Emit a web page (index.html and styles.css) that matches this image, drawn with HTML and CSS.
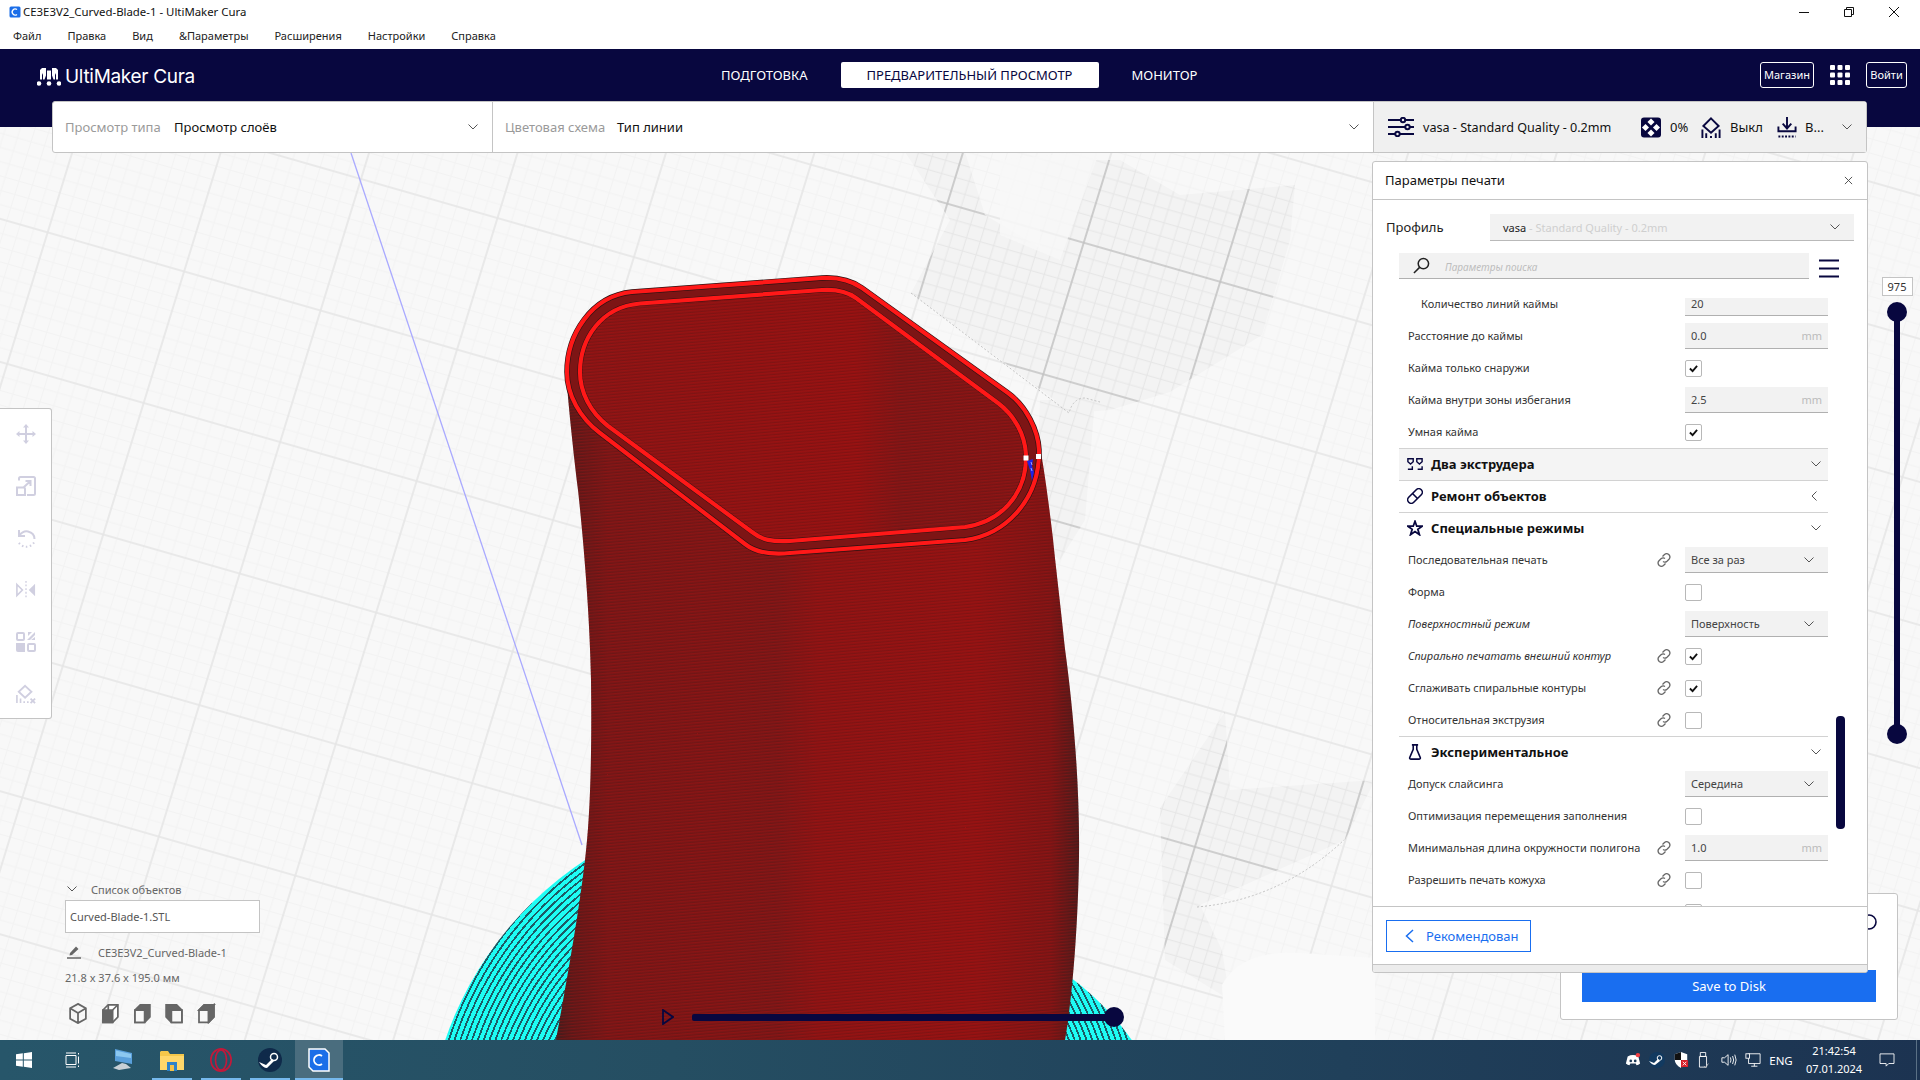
FILE: index.html
```
<!DOCTYPE html>
<html lang="ru">
<head>
<meta charset="utf-8">
<title>CE3E3V2_Curved-Blade-1 - UltiMaker Cura</title>
<link rel="stylesheet" href="styles.css">
</head>
<body>
<div class="titlebar">
  <svg class="app-icon" viewBox="0 0 12 12"><rect x="0.5" y="0.5" width="11" height="11" rx="1.5" fill="#1b6ee8"/><path d="M8 3.6A3 3 0 1 0 8 8.4" fill="none" stroke="#fff" stroke-width="1.3"/></svg>
  <span class="title-text">CE3E3V2_Curved-Blade-1 - UltiMaker Cura</span>
  <div class="win-btns">
    <svg class="win-btn" viewBox="0 0 12 12"><path d="M1 6.5H11" stroke="#111" fill="none"/></svg>
    <svg class="win-btn" viewBox="0 0 12 12"><path d="M1.5 3.5H8.5V10.5H1.5ZM3.5 3.5V1.5H10.5V8.5H8.5" stroke="#111" fill="none"/></svg>
    <svg class="win-btn" viewBox="0 0 12 12"><path d="M1 1L11 11M11 1L1 11" stroke="#111" fill="none"/></svg>
  </div>
</div>
<nav class="menubar">
  <span>Файл</span><span>Правка</span><span>Вид</span><span>&amp;Параметры</span><span>Расширения</span><span>Настройки</span><span>Справка</span>
</nav>
<header class="header">
  <div class="logo">
    <svg class="logo-mark" viewBox="0 0 24 18" fill="#fff"><path d="M5 0H9V7.500L7.500 11.500H6V5L5 7V11.500H3V2Z"/><path d="M19 0H15V7.500L16.500 11.500H18V5L19 7V11.500H21V2Z"/><path d="M10 2.500H14V11.500H10Z"/><circle cx="2" cy="15.500" r="2.300"/><circle cx="12" cy="15.500" r="2.300"/><circle cx="22" cy="15.500" r="2.300"/></svg>
    <span class="logo-text">UltiMaker Cura</span>
  </div>
  <div class="tabs">
    <span class="tab tab-first">ПОДГОТОВКА</span>
    <span class="tab tab-active">ПРЕДВАРИТЕЛЬНЫЙ ПРОСМОТР</span>
    <span class="tab">МОНИТОР</span>
  </div>
  <div class="head-actions">
    <span class="outline-btn btn-store">Магазин</span>
    <svg class="apps-icon" viewBox="0 0 20 20" fill="#fff"><rect x="0" y="0" width="5" height="5" rx="1"/><rect x="7.500" y="0" width="5" height="5" rx="1"/><rect x="15" y="0" width="5" height="5" rx="1"/><rect x="0" y="7.500" width="5" height="5" rx="1"/><rect x="7.500" y="7.500" width="5" height="5" rx="1"/><rect x="15" y="7.500" width="5" height="5" rx="1"/><rect x="0" y="15" width="5" height="5" rx="1"/><rect x="7.500" y="15" width="5" height="5" rx="1"/><rect x="15" y="15" width="5" height="5" rx="1"/></svg>
    <span class="outline-btn btn-login">Войти</span>
  </div>
</header>

<main class="stage">
  <svg class="scene" viewBox="0 127 1920 913" preserveAspectRatio="none">
    <defs>
      <pattern id="grid" patternUnits="userSpaceOnUse" width="142" height="138" patternTransform="matrix(0.961 0.275 -0.293 0.953 361 179)">
        <path d="M14.200 0V138M28.400 0V138M42.600 0V138M56.800 0V138M71 0V138M85.200 0V138M99.400 0V138M113.600 0V138M127.800 0V138M0 13.800H142M0 27.600H142M0 41.400H142M0 55.200H142M0 69H142M0 82.800H142M0 96.600H142M0 110.400H142M0 124.200H142" stroke="#f2f2f2" fill="none"/>
        <path d="M0 0V138M142 0V138M0 0H142M0 138H142" stroke="#e5e5e5" stroke-width="1.600" fill="none"/>
      </pattern>
      <pattern id="grid-dark" patternUnits="userSpaceOnUse" width="142" height="138" patternTransform="matrix(0.961 0.275 -0.293 0.953 361 179)">
        <rect width="142" height="138" fill="#f3f3f3"/>
        <path d="M14.200 0V138M28.400 0V138M42.600 0V138M56.800 0V138M71 0V138M85.200 0V138M99.400 0V138M113.600 0V138M127.800 0V138M0 13.800H142M0 27.600H142M0 41.400H142M0 55.200H142M0 69H142M0 82.800H142M0 96.600H142M0 110.400H142M0 124.200H142" stroke="#e6e6e6" fill="none"/>
        <path d="M0 0V138M142 0V138M0 0H142M0 138H142" stroke="#c2c2c2" stroke-width="1.600" fill="none"/>
      </pattern>
      <radialGradient id="rings" gradientUnits="userSpaceOnUse" cx="788" cy="1150" r="5.500" spreadMethod="repeat">
        <stop offset="0" stop-color="#1efcf4"/><stop offset=".68" stop-color="#1efcf4"/><stop offset=".68" stop-color="#1c5c66"/><stop offset="1" stop-color="#1c5c66"/>
      </radialGradient>
      <linearGradient id="wall" gradientUnits="userSpaceOnUse" x1="556" y1="0" x2="1082" y2="0">
        <stop offset="0" stop-color="#451d1d"/><stop offset=".03" stop-color="#601919"/><stop offset=".1" stop-color="#7a1717"/><stop offset=".3" stop-color="#7e1616"/><stop offset=".42" stop-color="#7b1717"/><stop offset=".5" stop-color="#8c1414"/><stop offset=".8" stop-color="#921313"/><stop offset=".94" stop-color="#7e1515"/><stop offset="1" stop-color="#451c1c"/>
      </linearGradient>
      <linearGradient id="inside" gradientUnits="userSpaceOnUse" x1="579" y1="0" x2="1026" y2="0">
        <stop offset="0" stop-color="#8a1515"/><stop offset=".62" stop-color="#931212"/><stop offset=".72" stop-color="#7e1616"/><stop offset="1" stop-color="#831515"/>
      </linearGradient>
      <pattern id="stripes" patternUnits="userSpaceOnUse" width="4" height="3" patternTransform="rotate(-5)">
        <rect width="4" height="1" fill="#b01010" opacity=".3"/><rect y="2" width="4" height="1" fill="#3a1212" opacity=".2"/>
      </pattern>
    </defs>
    <rect x="0" y="127" width="1920" height="913" fill="#f8f8f8"/>
    <rect x="0" y="127" width="1920" height="913" fill="url(#grid)"/>
    <path d="M905 152H965L985 215L1040 248V160L1120 160L1180 195L1295 185L1290 240L1262 335L1170 392L1110 410L1072 413L911 293L950 220Z" fill="url(#grid-dark)"/>
    <path d="M1040 400H1095L1085 520L1060 560L1035 540Z" fill="url(#grid-dark)"/>
    <path d="M1225 712L1160 808L1165 960L1230 1000L1222 950L1200 905L1345 840L1375 780L1230 790Z" fill="url(#grid-dark)"/>
    <path d="M1000 160L1100 150L1060 260L1000 235Z" fill="#f8f8f8" opacity=".8"/>
    <path d="M1222 985Q1240 950 1300 953L1375 958L1375 1040H1225Z" fill="#fafafa"/>
    <path d="M911 293L1069 413Q1073 398 1085 398L1100 402" fill="none" stroke="#c4c4c4" stroke-dasharray="2 2"/>
    <path d="M1197 907Q1280 900 1344 840" fill="none" stroke="#c4c4c4" stroke-dasharray="2 2"/>
    <path d="M351 153L582 845" stroke="#a9a9ff" stroke-width="1.300" fill="none"/>
    <path d="M788 799.400A361 350.600 0 0 0 427 1150H788Z" fill="url(#rings)"/>
    <path d="M788 892A380 258 0 0 1 1168 1150H788Z" fill="url(#rings)"/>
    <path d="M566 372C568 400 572 440 578 490C584 545 590 620 591 680C592 760 590 820 585 860C578 920 565 990 556 1040H1065C1072 1000 1078 930 1079 857C1080 780 1072 700 1065 649C1060 600 1055 560 1053 539C1049 505 1045 475 1041 453L1039 440L1000 400L800 300L640 300Z" fill="url(#wall)"/>
    <path d="M566 372C568 400 572 440 578 490C584 545 590 620 591 680C592 760 590 820 585 860C578 920 565 990 556 1040H1065C1072 1000 1078 930 1079 857C1080 780 1072 700 1065 649C1060 600 1055 560 1053 539C1049 505 1045 475 1041 453L1039 440L1000 400L800 300L640 300Z" fill="url(#stripes)"/>
    <path d="M567 372C567 335 591 296 632 292L822 278C840 277 852 281 862 288L1008 393C1026 406 1038 430 1039 450C1040 500 1005 535 965 540L790 553C770 555 755 552 745 544L600 433C580 418 567 395 567 372Z" fill="#7d1515" stroke="#2c1212" stroke-width="5.500"/>
    <path d="M567 372C567 335 591 296 632 292L822 278C840 277 852 281 862 288L1008 393C1026 406 1038 430 1039 450C1040 500 1005 535 965 540L790 553C770 555 755 552 745 544L600 433C580 418 567 395 567 372Z" fill="none" stroke="#ff1818" stroke-width="4.200"/>
    <path d="M580 372C580 340 600 307 640 303.500L822 290C838 289 848 292 856 298L998 403C1014 415 1025 434 1026 455C1027 495 1000 522 965 527L790 541C772 542 762 540 752 532L608 426C590 412 580 392 580 372Z" fill="url(#inside)" stroke="#2c1212" stroke-width="5.200"/>
    <path d="M580 372C580 340 600 307 640 303.500L822 290C838 289 848 292 856 298L998 403C1014 415 1025 434 1026 455C1027 495 1000 522 965 527L790 541C772 542 762 540 752 532L608 426C590 412 580 392 580 372Z" fill="url(#stripes)" stroke="#ff1818" stroke-width="4.200"/>
    <path d="M1027 461L1033 459L1032 466L1034 472L1032 481L1030 470Z" fill="#1e22e8"/>
    <path d="M1031 462l1 3m-1 3l1 3" stroke="#9fa4ff" fill="none"/>
    <rect x="1023.500" y="455.500" width="5" height="5" fill="#fff"/>
    <rect x="1036" y="454" width="5" height="5" fill="#fff"/>
  </svg>

  <div class="viewbar">
    <div class="view-cell view-cell-type">
      <span class="muted">Просмотр типа</span><span class="strong">Просмотр слоёв</span>
      <svg class="chev chev-end" viewBox="0 0 10 6"><path d="M.5 .5L5 5L9.500 .5"/></svg>
    </div>
    <div class="view-cell view-cell-scheme">
      <span class="muted muted-wide">Цветовая схема</span><span class="strong">Тип линии</span>
      <svg class="chev chev-end" viewBox="0 0 10 6"><path d="M.5 .5L5 5L9.500 .5"/></svg>
    </div>
    <div class="view-cell view-cell-print">
      <svg class="bar-icon bar-icon-wide" viewBox="0 0 26 20" fill="none" stroke="#08073f" stroke-width="2"><path d="M0 3H13M18 3H26M0 10H17M22 10H26M0 17H7M12 17H26"/><circle cx="15" cy="3" r="2.200"/><circle cx="19.500" cy="10" r="2.200"/><circle cx="9.500" cy="17" r="2.200"/></svg>
      <span class="print-name">vasa - Standard Quality - 0.2mm</span>
      <svg class="bar-icon" viewBox="0 0 20 20"><rect width="20" height="20" rx="3" fill="#08073f"/><g fill="#fff"><rect x="7.500" y="2" width="5" height="5" transform="rotate(45 10 4.500)"/><rect x="7.500" y="13" width="5" height="5" transform="rotate(45 10 15.500)"/><rect x="2" y="7.500" width="5" height="5" transform="rotate(45 4.500 10)"/><rect x="13" y="7.500" width="5" height="5" transform="rotate(45 15.500 10)"/></g></svg>
      <span class="print-val val-infill">0%</span>
      <svg class="bar-icon" viewBox="0 0 20 22" fill="none" stroke="#08073f" stroke-width="2"><path d="M10 1.500L18 9.500L10 16.500L2 9.500Z"/><path d="M1 13V22M5 17V22M10 20V22M15 17V22M19 13V22"/></svg>
      <span class="print-val val-support">Выкл</span>
      <svg class="bar-icon" viewBox="0 0 20 22" fill="none" stroke="#08073f" stroke-width="2"><path d="M10 0V11M5.500 7L10 12L14.500 7"/><path d="M1 10V15H19V10"/><path d="M1 20.500H19" stroke-dasharray="2 1.500"/></svg>
      <span class="print-val val-adhesion">В...</span>
      <svg class="chev chev-end" viewBox="0 0 10 6"><path d="M.5 .5L5 5L9.500 .5"/></svg>
    </div>
  </div>

  <aside class="toolbox">
    <svg class="tool" viewBox="0 0 20 20"><path d="M10 0L13 3.500H11V9H16.500V7L20 10L16.500 13V11H11V16.500H13L10 20L7 16.500H9V11H3.500V13L0 10L3.500 7V9H9V3.500H7Z"/></svg>
    <svg class="tool" viewBox="0 0 20 20"><path d="M3 4.500V2.500Q3 1 4.500 1H17.500Q19 1 19 2.500V17.500Q19 19 17.500 19H11M1 11.500H7.500Q9 11.500 9 13V19H1ZM7.500 11.500L14.500 5M9.500 5H14.500V10" fill="none" stroke="#d0cfe0" stroke-width="2"/></svg>
    <svg class="tool" viewBox="0 0 20 20"><path d="M3 2V8H9M3.500 7.500Q7 2.500 12 3.500Q18.500 5 18.500 11" fill="none" stroke="#d0cfe0" stroke-width="2"/><path d="M18 14.500A9 9 0 0 1 2 13" fill="none" stroke="#d0cfe0" stroke-width="2" stroke-dasharray="1.500 2.500"/></svg>
    <svg class="tool" viewBox="0 0 22 20"><path d="M1 4L7 10L1 16Z" fill="none" stroke="#d0cfe0" stroke-width="1.800"/><path d="M21 3V17L14 10Z"/><path d="M11 0V20" stroke="#d0cfe0" stroke-width="1.500" stroke-dasharray="2 2" fill="none"/></svg>
    <svg class="tool" viewBox="0 0 20 20"><rect x="1" y="1" width="7" height="7" rx="1" fill="none" stroke="#d0cfe0" stroke-width="2"/><path d="M11 8L19 0V3L14 8M12 4L16 0H12ZM15 8H19V5Z"/><path d="M0 11H9V20H2Q0 20 0 18Z"/><rect x="12" y="12" width="7" height="7" rx="1" fill="none" stroke="#d0cfe0" stroke-width="2"/></svg>
    <svg class="tool" viewBox="0 0 22 20"><path d="M10 1L17 7.500L10 14L3 7.500Z" fill="none" stroke="#d0cfe0" stroke-width="2"/><path d="M1 11V20M5 15V20M9 18V20M13 18V20" stroke="#d0cfe0" stroke-width="1.800"/><path d="M16 15L21 20M21 15L16 20" stroke="#d0cfe0" stroke-width="2"/></svg>
  </aside>

  <section class="objects">
    <div class="obj-title"><svg class="chev chev-obj" viewBox="0 0 10 6"><path d="M.5 .5L5 5L9.500 .5"/></svg><span>Список объектов</span></div>
    <div class="obj-file">Curved-Blade-1.STL</div>
    <div class="obj-name"><svg class="pen" viewBox="0 0 14 14"><path d="M3 8L9 1.500L11.500 4L5 10L2.500 10.500Z" fill="#666"/><path d="M0 13H14" stroke="#666" stroke-width="1.500"/></svg><span>CE3E3V2_Curved-Blade-1</span></div>
    <div class="obj-size">21.8 x 37.6 x 195.0 мм</div>
    <div class="obj-views">
      <svg class="cube" viewBox="0 0 20 24" fill="none" stroke="#666" stroke-width="2"><path d="M10 1L19 6V18L10 23L1 18V6ZM1 6L10 11.500L19 6M10 11.500V23"/></svg>
      <svg class="cube" viewBox="0 0 20 24" stroke="#666" stroke-width="2" fill="#fff"><path d="M2 8L8 2H19V16L13 22H2Z"/><path d="M2 8H13V22H2Z" fill="#666"/><path d="M8 2V8M13 8L19 2"/></svg>
      <svg class="cube" viewBox="0 0 20 24" stroke="#666" stroke-width="2" fill="#fff"><path d="M2 8L8 2H19V16L13 22H2Z" fill="#666"/><path d="M2 8H13V22H2Z" fill="#f8f8f8"/></svg>
      <svg class="cube" viewBox="0 0 20 24" stroke="#666" stroke-width="2" fill="#666"><path d="M1 2H13L19 8V22H7L1 16Z"/><path d="M7 8H19V22H7Z" fill="#f8f8f8"/></svg>
      <svg class="cube" viewBox="0 0 20 24" stroke="#666" stroke-width="2" fill="#f8f8f8"><path d="M2 8L8 2H19V16L13 22H2Z"/><path d="M2 8L8 2H19L13 8Z" fill="#666"/><path d="M13 8V22"/><path d="M13 8L19 2V16L13 22Z" fill="#666"/></svg>
    </div>
  </section>

  <div class="path-slider">
    <svg class="play" viewBox="0 0 12 16"><path d="M1 1L11 8L1 15Z" fill="none" stroke="#08073f" stroke-width="1.800"/></svg>
    <div class="h-track"><span class="h-handle"></span></div>
  </div>

  <div class="layer-slider">
    <span class="layer-label">975</span>
    <div class="v-track"><span class="v-handle"></span><span class="v-handle"></span></div>
  </div>

  <div class="save-card">
    <svg class="info-arc" viewBox="0 0 16 16"><circle cx="8" cy="8" r="7" fill="none" stroke="#08073f" stroke-width="1.600"/></svg>
    <button class="save-btn">Save to Disk</button>
  </div>

  <section class="panel">
    <div class="panel-head"><span class="panel-title">Параметры печати</span>
      <svg class="close" viewBox="0 0 10 10"><path d="M1 1L9 9M9 1L1 9"/></svg>
    </div>
    <div class="profile-row">
      <span class="profile-label">Профиль</span>
      <div class="profile-select"><span class="strong-small">vasa</span><span class="faint"> - Standard Quality - 0.2mm</span>
        <svg class="chev chev-end" viewBox="0 0 10 6"><path d="M.5 .5L5 5L9.500 .5"/></svg>
      </div>
    </div>
    <div class="search-row">
      <div class="search-box">
        <svg class="search-icon" viewBox="0 0 18 18" fill="none" stroke="#222" stroke-width="1.600"><circle cx="11" cy="7" r="5.500"/><path d="M7 11L1 17"/></svg>
        <span>Параметры поиска</span>
      </div>
      <svg class="hamburger" viewBox="0 0 20 19"><path d="M0 1.500H20M0 9.500H20M0 17.500H20" stroke="#08073f" stroke-width="2.200"/></svg>
    </div>
    <div class="list">
      <div class="rows">
        <div class="row row-first"><span class="lbl lbl-child">Количество линий каймы</span><span></span><div class="field">20</div></div>
        <div class="row"><span class="lbl">Расстояние до каймы</span><span></span><div class="field">0.0<em>mm</em></div></div>
        <div class="row"><span class="lbl">Кайма только снаружи</span><span></span><span class="cb"><svg viewBox="0 0 10 10"><path d="M1 5L4 8L9 2" fill="none" stroke="#111" stroke-width="2"/></svg></span></div>
        <div class="row"><span class="lbl">Кайма внутри зоны избегания</span><span></span><div class="field">2.5<em>mm</em></div></div>
        <div class="row"><span class="lbl">Умная кайма</span><span></span><span class="cb"><svg viewBox="0 0 10 10"><path d="M1 5L4 8L9 2" fill="none" stroke="#111" stroke-width="2"/></svg></span></div>

        <div class="section section-hover section-line">
          <svg class="sec-icon" viewBox="0 0 18 14" fill="none" stroke="#08073f" stroke-width="1.600"><path d="M1 1H7V4.500L4 7L1 4.500ZM11 1H17V4.500L14 7L11 4.500ZM1 13H6V9.500M12 13H17V9.500"/></svg>
          <span>Два экструдера</span>
          <svg class="chev chev-end" viewBox="0 0 10 6"><path d="M.5 .5L5 5L9.500 .5"/></svg>
        </div>
        <div class="section section-line">
          <svg class="sec-icon" viewBox="0 0 18 18" fill="none" stroke="#08073f" stroke-width="1.800"><g transform="rotate(-45 9 9)"><rect x="-1" y="5" width="20" height="8" rx="4"/><path d="M9 5V13"/></g></svg>
          <span>Ремонт объектов</span>
          <svg class="chev chev-end chev-left" viewBox="0 0 6 10"><path d="M5.500 .5L1 5L5.500 9.500"/></svg>
        </div>
        <div class="section section-line">
          <svg class="sec-icon" viewBox="0 0 18 18" fill="none" stroke="#08073f" stroke-width="2"><path d="M9 1.500L11 7H17L12.200 10.500L14 16.500L9 13L4 16.500L5.800 10.500L1 7H7Z"/></svg>
          <span>Специальные режимы</span>
          <svg class="chev chev-end" viewBox="0 0 10 6"><path d="M.5 .5L5 5L9.500 .5"/></svg>
        </div>

        <div class="row"><span class="lbl">Последовательная печать</span><svg class="link" viewBox="0 0 16 16"><path d="M6.500 4.500L8.500 2.500Q10.500 .8 12.800 2.500Q15 5 13 7.200L11 9.200Q9 11 7 9.500M9.500 11.500L7.500 13.500Q5.500 15.200 3.200 13.500Q1 11 3 8.800L5 6.800Q7 5 9 6.500"/></svg><div class="field select">Все за раз<svg class="chev" viewBox="0 0 10 6"><path d="M.5 .5L5 5L9.500 .5"/></svg></div></div>
        <div class="row"><span class="lbl">Форма</span><span></span><span class="cb"></span></div>
        <div class="row"><span class="lbl lbl-i">Поверхностный режим</span><span></span><div class="field select">Поверхность<svg class="chev" viewBox="0 0 10 6"><path d="M.5 .5L5 5L9.500 .5"/></svg></div></div>
        <div class="row"><span class="lbl lbl-i">Спирально печатать внешний контур</span><svg class="link" viewBox="0 0 16 16"><path d="M6.500 4.500L8.500 2.500Q10.500 .8 12.800 2.500Q15 5 13 7.200L11 9.200Q9 11 7 9.500M9.500 11.500L7.500 13.500Q5.500 15.200 3.200 13.500Q1 11 3 8.800L5 6.800Q7 5 9 6.500"/></svg><span class="cb"><svg viewBox="0 0 10 10"><path d="M1 5L4 8L9 2" fill="none" stroke="#111" stroke-width="2"/></svg></span></div>
        <div class="row"><span class="lbl">Сглаживать спиральные контуры</span><svg class="link" viewBox="0 0 16 16"><path d="M6.500 4.500L8.500 2.500Q10.500 .8 12.800 2.500Q15 5 13 7.200L11 9.200Q9 11 7 9.500M9.500 11.500L7.500 13.500Q5.500 15.200 3.200 13.500Q1 11 3 8.800L5 6.800Q7 5 9 6.500"/></svg><span class="cb"><svg viewBox="0 0 10 10"><path d="M1 5L4 8L9 2" fill="none" stroke="#111" stroke-width="2"/></svg></span></div>
        <div class="row"><span class="lbl">Относительная экструзия</span><svg class="link" viewBox="0 0 16 16"><path d="M6.500 4.500L8.500 2.500Q10.500 .8 12.800 2.500Q15 5 13 7.200L11 9.200Q9 11 7 9.500M9.500 11.500L7.500 13.500Q5.500 15.200 3.200 13.500Q1 11 3 8.800L5 6.800Q7 5 9 6.500"/></svg><span class="cb"></span></div>

        <div class="section section-line">
          <svg class="sec-icon" viewBox="0 0 14 18" fill="none" stroke="#08073f" stroke-width="1.800"><path d="M3.500 1H10.500M5 1V6L1 15.500Q.8 17 2.500 17H11.500Q13.200 17 13 15.500L9 6V1"/></svg>
          <span>Экспериментальное</span>
          <svg class="chev chev-end" viewBox="0 0 10 6"><path d="M.5 .5L5 5L9.500 .5"/></svg>
        </div>
        <div class="row"><span class="lbl">Допуск слайсинга</span><span></span><div class="field select">Середина<svg class="chev" viewBox="0 0 10 6"><path d="M.5 .5L5 5L9.500 .5"/></svg></div></div>
        <div class="row"><span class="lbl">Оптимизация перемещения заполнения</span><span></span><span class="cb"></span></div>
        <div class="row"><span class="lbl">Минимальная длина окружности полигона</span><svg class="link" viewBox="0 0 16 16"><path d="M6.500 4.500L8.500 2.500Q10.500 .8 12.800 2.500Q15 5 13 7.200L11 9.200Q9 11 7 9.500M9.500 11.500L7.500 13.500Q5.500 15.200 3.200 13.500Q1 11 3 8.800L5 6.800Q7 5 9 6.500"/></svg><div class="field">1.0<em>mm</em></div></div>
        <div class="row"><span class="lbl">Разрешить печать кожуха</span><svg class="link" viewBox="0 0 16 16"><path d="M6.500 4.500L8.500 2.500Q10.500 .8 12.800 2.500Q15 5 13 7.200L11 9.200Q9 11 7 9.500M9.500 11.500L7.500 13.500Q5.500 15.200 3.200 13.500Q1 11 3 8.800L5 6.800Q7 5 9 6.500"/></svg><span class="cb"></span></div>
        <div class="row"><span></span><span></span><span class="cb"></span></div>
      </div>
      <span class="scrollbar"></span>
    </div>
    <div class="panel-foot">
      <button class="rec-btn"><svg class="rec-chev" viewBox="0 0 9 14"><path d="M8 1L1.500 7L8 13"/></svg>Рекомендован</button>
    </div>
    <div class="panel-grip"></div>
  </section>
</main>

<footer class="taskbar">
  <div class="task-slot"><svg class="task-icon win" viewBox="0 0 16 16" fill="#fff"><path d="M0 2.300L6.800 1.300V7.500H0ZM7.800 1.200L16 0V7.500H7.800ZM0 8.500H6.800V14.700L0 13.700ZM7.800 8.500H16V16L7.800 14.800Z"/></svg></div>
  <div class="task-slot"><svg class="task-icon" viewBox="0 0 16 16" fill="none" stroke="#fff"><path d="M1 3.500H11V12.500H1ZM1 1H11M1 15H11M13.500 1V2.500M13.500 4.500V11.500M13.500 13.500V15"/></svg></div>
  <div class="task-slot task-gap"><svg class="task-pc" viewBox="0 0 24 24"><path d="M4 1L21 5V16L4 13Z" fill="#5aa0dc"/><path d="M5 2.500L20 6V10L5 8Z" fill="#8cc8f0"/><path d="M11 15L15 16L20 20L8 22L2 20Z" fill="#c8d0d6"/></svg></div>
  <div class="task-slot running"><svg class="task-pc" viewBox="0 0 24 22"><path d="M0 3V21H24V5H10L8 2H1Z" fill="#f5c74a"/><path d="M0 7H24V21H0Z" fill="#ffd76a"/><path d="M7 13H17V22H7Z" fill="#2c82c9"/><path d="M10 16H14V22H10Z" fill="#f2c14a"/></svg></div>
  <div class="task-slot running"><svg class="task-pc" viewBox="0 0 24 26" fill="none" stroke="#c2193a"><ellipse cx="12" cy="13" rx="11" ry="12" stroke-width="1.800"/><ellipse cx="12" cy="13" rx="6" ry="11" stroke-width="1.800"/></svg></div>
  <div class="task-slot running"><svg class="task-pc" viewBox="0 0 24 24"><circle cx="12" cy="12" r="12" fill="#0f2a4a"/><circle cx="16" cy="9" r="3.500" fill="none" stroke="#fff" stroke-width="1.500"/><path d="M1 14L8 17L14 11L16 13L9 20Q5 20 1 14Z" fill="#fff"/></svg></div>
  <div class="task-slot running task-active"><svg class="task-pc" viewBox="0 0 24 24"><path d="M2 1H18L22 5V23H6L2 19Z" fill="#1b6ee8" stroke="#fff" stroke-width="1.500"/><path d="M15 8A5 5 0 1 0 15 16" fill="none" stroke="#fff" stroke-width="1.800"/></svg></div>
  <div class="tray">
    <svg class="tray-icon tray-wide" viewBox="0 0 18 16"><path d="M3 4Q9 1 15 4L17 12Q15 14 13 14L12 12H6L5 14Q3 14 1 12Z" fill="#fff"/><circle cx="6.500" cy="9" r="1.500" fill="#1c3a58"/><circle cx="11.500" cy="9" r="1.500" fill="#1c3a58"/><circle cx="14.500" cy="2.500" r="2.500" fill="#f23f43"/></svg>
    <svg class="tray-icon tray-wide" viewBox="0 0 16 16"><circle cx="8" cy="8" r="8" fill="#123a60"/><circle cx="10.500" cy="6" r="2.300" fill="none" stroke="#fff"/><path d="M0 9L5 11L9 7L11 9L6 13Q3 13 0 9Z" fill="#fff"/></svg>
    <svg class="tray-icon tray-wide" viewBox="0 0 16 18"><path d="M8 0L15 2.500V9Q15 14 8 18Q1 14 1 9V2.500Z" fill="#fff"/><path d="M8 0L1 2.500V9H8ZM8 9V18L15 14V9Z" fill="#111"/><rect x="8" y="9" width="8" height="8" rx="1" fill="#d8202a"/><path d="M10 11L14 15M14 11L10 15" stroke="#fff"/></svg>
    <svg class="tray-icon" viewBox="0 0 12 18" fill="none" stroke="#fff"><path d="M3 .5H9V5H3ZM2 5H10V17H2Z"/><path d="M7 16L9 17.500L12 13" stroke="#bbb"/></svg>
    <svg class="tray-icon tray-wide" viewBox="0 0 18 16" fill="none" stroke="#fff"><path d="M1 5.500H4L8 2V14L4 10.500H1Z"/><path d="M10.500 5Q12 8 10.500 11M13 3.500Q15.500 8 13 12.500M15.500 2Q18.500 8 15.500 14"/></svg>
    <svg class="tray-icon tray-wide" viewBox="0 0 18 16" fill="none" stroke="#fff"><path d="M4 1H17V12H4ZM10.500 12V15M7 15H14"/><rect x="1" y="1" width="4" height="5" fill="#1c3452"/></svg>
    <span class="tray-lang">ENG</span>
    <div class="tray-clock"><span>21:42:54</span><span>07.01.2024</span></div>
    <svg class="tray-note" viewBox="0 0 18 16" fill="none" stroke="#fff"><path d="M1 1H17V12H11L8 15V12H1Z"/></svg>
    <span class="tray-show"></span>
  </div>
</footer>
</body>
</html>
```
FILE: styles.css
```
* { box-sizing: border-box; }
html, body { margin: 0; padding: 0; }
body {
  width: 1920px; height: 1080px; overflow: hidden;
  display: flex; flex-direction: column;
  font-family: "Noto Sans", "Open Sans", sans-serif;
  background: #fff; color: #111;
}
svg { display: block; flex: none; }

/* window chrome */
.titlebar { height: 24px; display: flex; align-items: center; padding-left: 9px; background: #fff; }
.app-icon { width: 12px; height: 12px; }
.title-text { margin-left: 2px; padding-bottom: 2px; font-size: 11.400px; color: #111; }
.win-btns { margin-left: auto; display: flex; gap: 33px; padding-right: 20px; }
.win-btn { width: 12px; height: 12px; }
.menubar { height: 25px; padding-bottom: 2px; display: flex; align-items: center; padding-left: 13px; gap: 26px; font-size: 11px; color: #222; background: #fff; }

/* header */
.header { height: 78px; background: #08073f; position: relative; display: flex; color: #fff; padding-top: 13px; align-items: flex-start; }
.logo { width: 695px; padding-left: 37px; padding-top: 3px; display: flex; align-items: center; gap: 4px; }
.logo-mark { width: 24px; height: 18px; }
.logo-text { font-family: Inter, "Liberation Sans", sans-serif; font-size: 19px; letter-spacing: -.3px; }
.tabs { display: flex; align-items: center; height: 26px; font-size: 13px; }
.tab { padding: 0 26px; line-height: 26px; text-align: center; }
.tab-first { padding-right: 33px; }
.tab-active { width: 258px; padding: 0; margin: 0 7px 0 0; background: #fff; color: #08073f; border-radius: 2px; }
.head-actions { margin-left: auto; display: flex; align-items: center; gap: 16px; padding-right: 13px; }
.outline-btn { border: 1px solid #fff; border-radius: 3px; height: 26px; line-height: 24px; font-size: 11px; text-align: center; }
.btn-store { width: 54px; }
.btn-login { width: 41px; }
.apps-icon { width: 20px; height: 20px; }

/* 3D stage */
.stage { position: relative; flex: 1; min-height: 0; }
.scene { position: absolute; inset: 0; width: 100%; height: 100%; }

.viewbar { position: absolute; left: 52px; top: -26px; width: 1815px; height: 52px; display: flex; background: #fff; border: 1px solid #c4c4c4; border-radius: 3px; font-size: 13px; }
.view-cell { display: flex; align-items: center; height: 100%; }
.view-cell-type { width: 440px; padding-left: 12px; border-right: 1px solid #c4c4c4; }
.view-cell-scheme { width: 880px; padding-left: 12px; }
.view-cell-print { flex: 1; background: #f0f0f0; border-left: 1px solid #c4c4c4; padding-left: 14px; }
.muted { color: #9a9a9a; width: 109px; flex: none; }
.muted-wide { width: 112px; }
.strong { color: #111; }
.chev { width: 10px; height: 6px; fill: none; stroke: #555; stroke-width: 1; }
.chev-end { margin-left: auto; margin-right: 14px; }
.bar-icon { width: 20px; height: 21px; }
.bar-icon-wide { width: 26px; height: 20px; }
.print-name { margin-left: 9px; width: 218px; flex: none; font-size: 12.600px; }
.print-val { flex: none; }
.val-infill { margin-left: 9px; width: 31px; }
.val-support { margin-left: 9px; width: 47px; }
.val-adhesion { margin-left: 8px; }

/* tools */
.toolbox { position: absolute; left: 0; top: 281px; width: 52px; height: 311px; background: #fff; border: 1px solid #c4c4c4; border-left: 0; border-radius: 0 3px 3px 0; display: flex; flex-direction: column; align-items: center; gap: 32px; padding-top: 15px; }
.tool { width: 20px; height: 20px; fill: #d0cfe0; }

.objects { position: absolute; left: 65px; top: 754px; width: 195px; font-size: 11px; color: #666; display: flex; flex-direction: column; }
.obj-title { display: flex; align-items: center; height: 16px; gap: 14px; padding-left: 2px; }
.chev-obj { flex: none; margin: 0; }
.obj-file { margin-top: 3px; height: 33px; line-height: 31px; background: #fff; border: 1px solid #c4c4c4; padding-left: 4px; color: #555; }
.obj-name { display: flex; align-items: center; gap: 17px; margin-top: 10px; height: 18px; padding-left: 2px; }
.pen { width: 14px; height: 14px; }
.obj-size { margin-top: 9px; height: 16px; line-height: 16px; }
.obj-views { display: flex; gap: 12px; margin-top: 17px; padding-left: 3px; }
.cube { width: 20px; height: 21px; }

.path-slider { position: absolute; left: 662px; top: 880px; display: flex; align-items: center; gap: 18px; height: 20px; }
.play { width: 12px; height: 16px; }
.h-track { position: relative; width: 422px; height: 7px; background: #08073f; border-radius: 2px; }
.h-handle { position: absolute; right: -10px; top: -6.500px; width: 20px; height: 20px; background: #08073f; border-radius: 50%; }

.layer-slider { position: absolute; left: 1877px; top: 150px; width: 40px; display: flex; flex-direction: column; align-items: center; }
.layer-label { width: 31px; height: 19px; line-height: 17px; background: #fff; border: 1px solid #c4c4c4; font-size: 11px; text-align: center; color: #333; margin-left: 0; }
.v-track { position: relative; margin-top: 6px; width: 20px; height: 442px; display: flex; flex-direction: column; justify-content: space-between; }
.v-track::before { content: ""; position: absolute; left: 7px; top: 10px; bottom: 10px; width: 6px; background: #08073f; }
.v-handle { position: relative; width: 20px; height: 20px; background: #08073f; border-radius: 50%; }

.save-card { position: absolute; left: 1560px; top: 766px; width: 338px; height: 127px; background: #fff; border: 1px solid #c4c4c4; border-radius: 3px; padding: 76px 21px 0; }
.info-arc { position: absolute; right: 20px; top: 20px; width: 16px; height: 16px; }
.save-btn { display: block; width: 294px; height: 32px; border: 0; background: #196ef0; color: #fff; font: 13px "Noto Sans", sans-serif; }

/* settings panel */
.panel { position: absolute; left: 1372px; top: 34px; width: 496px; height: 812px; background: #fff; border: 1px solid #c4c4c4; border-radius: 3px; display: flex; flex-direction: column; overflow: hidden; }
.panel-head { height: 38px; flex: none; border-bottom: 1px solid #c4c4c4; display: flex; align-items: center; justify-content: space-between; padding: 0 14px 0 12px; font-size: 13px; }
.panel-title { padding-bottom: 2px; }
.close { width: 9px; height: 9px; stroke: #444; fill: none; }
.profile-row { display: flex; align-items: center; flex: none; margin-top: 14px; height: 27px; padding-left: 13px; }
.profile-label { width: 104px; font-size: 13px; color: #222; padding-bottom: 2px; }
.profile-select { width: 364px; height: 27px; display: flex; align-items: center; padding-left: 13px; background: #f2f2f2; border-bottom: 1px solid #b9b9b9; font-size: 11px; }
.strong-small { color: #222; white-space: pre; }
.faint { color: #cfcfcf; white-space: pre; }
.search-row { display: flex; align-items: center; flex: none; margin-top: 12px; height: 26px; padding-left: 26px; }
.search-box { width: 410px; height: 26px; background: #f2f2f2; border-bottom: 1px solid #b0b0b0; display: flex; align-items: center; padding: 3px 0 0 14px; gap: 15px; font-size: 10px; font-style: italic; color: #bdbdbd; }
.search-icon { width: 17px; height: 17px; margin-top: -3px; }
.hamburger { width: 20px; height: 19px; margin: 5px 0 0 10px; }
.list { flex: 1; min-height: 0; margin-top: 19px; position: relative; overflow: hidden; }
.rows { margin-left: 26px; width: 429px; }
.row { height: 32px; display: grid; grid-template-columns: 1fr 16px 143px; column-gap: 13px; align-items: center; padding-left: 9px; font-size: 11px; color: #333; }
.row-first { height: 22px; align-items: start; }
.row-first .field { height: 18px; align-items: flex-start; }
.lbl { white-space: nowrap; line-height: 12px; }
.lbl-child { padding-left: 13px; }
.lbl-i { font-style: italic; }
.field { height: 26px; line-height: 12px; background: #f2f2f2; border-bottom: 1px solid #b0b0b0; display: flex; align-items: center; justify-content: space-between; padding: 0 6px; color: #444; }
.field em { font-style: normal; color: #bbb; }
.select { padding-right: 14px; }
.cb { width: 17px; height: 17px; border: 1px solid #b8b8b8; border-radius: 2px; background: #fff; display: flex; align-items: center; justify-content: center; }
.cb svg { width: 9px; height: 9px; }
.link { width: 16px; height: 16px; fill: none; stroke: #666; stroke-width: 1.300; }
.section { height: 32px; display: flex; align-items: center; padding: 0 0 2px 8px; gap: 8px; font-size: 13px; font-weight: 700; color: #111; }
.section-line { border-top: 1px solid #d2d2d2; }
.section-hover { background: #f4f4f4; }
.sec-icon { width: 16px; height: 16px; }
.section .chev-end { margin-right: 7px; }
.section .chev-left { width: 6px; height: 10px; margin-right: 11px; }
.scrollbar { position: absolute; left: 463px; top: 418px; width: 9px; height: 113px; background: #08073f; border-radius: 4px; }
.panel-foot { height: 58px; flex: none; border-top: 1px solid #c4c4c4; padding: 13px 0 0 13px; }
.rec-btn { width: 145px; height: 32px; background: #fff; border: 1px solid #196ef0; color: #196ef0; font: 13px "Noto Sans", sans-serif; display: flex; align-items: center; padding: 0 0 0 18px; gap: 12px; }
.rec-chev { width: 9px; height: 14px; fill: none; stroke: #196ef0; stroke-width: 1.500; }
.panel-grip { height: 8px; flex: none; background: #ececec; border-top: 1px solid #c4c4c4; }

/* taskbar */
.taskbar { height: 40px; flex: none; display: flex; gap: 1px; background: linear-gradient(90deg, #27566a 0%, #254e62 35%, #20405a 70%, #1c3351 100%); color: #fff; }
.task-slot { position: relative; width: 48px; height: 40px; display: flex; align-items: center; justify-content: center; }
.task-gap { margin-left: 1px; }
.task-icon { width: 16px; height: 16px; }
.task-pc { width: 24px; height: 24px; }
.running::after { content: ""; position: absolute; left: 4px; right: 4px; bottom: 0; height: 2px; background: #76b9ed; }
.task-active { background: #4a6d7e; }
.task-active::after { left: 0; right: 0; }
.tray { margin-left: auto; display: flex; align-items: center; height: 40px; font-size: 12px; }
.tray-icon { width: 12px; height: 16px; margin-right: 12px; }
.tray-wide { width: 16px; margin-right: 8px; }
.tray-lang { width: 28px; margin-left: -2px; text-align: center; font-size: 11.500px; }
.tray-clock { width: 70px; margin-left: 4px; display: flex; flex-direction: column; align-items: center; line-height: 18px; font-size: 11px; }
.tray-note { width: 16px; height: 14px; margin-left: 10px; }
.tray-show { width: 1px; height: 40px; margin-left: 21px; margin-right: 3px; background: #5a7085; }
```
